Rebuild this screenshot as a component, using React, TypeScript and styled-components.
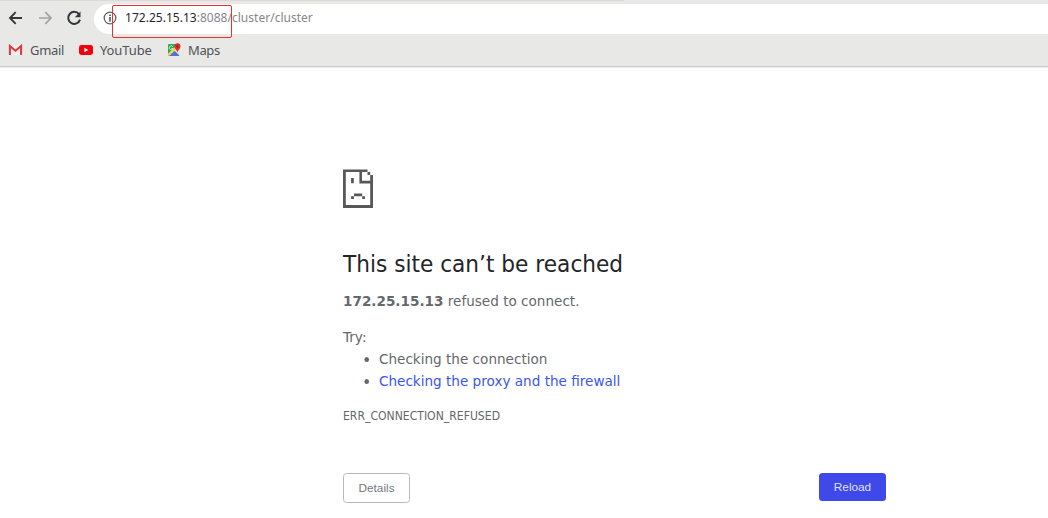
import React from "react";
import styled, { createGlobalStyle } from "styled-components";

const GlobalStyle = createGlobalStyle`
  * { box-sizing: border-box; }
  body {
    margin: 0;
    background: #fff;
    overflow: hidden;
  }
`

const Window = styled.div`
  display: flex;
  flex-flow: column;
  height: 518px;
  font-family: "DejaVu Sans", sans-serif;
`

const Chrome = styled.header`
  display: flex;
  flex-flow: column;
  height: 68px;
  flex-shrink: 0;
  background: #e8e8e7;
  border-bottom: 1px solid #e9e9e9;
  box-shadow: inset 0 -1px #cdcdcc;
  font-family: "Noto Sans", sans-serif;
`

const TabEdge = styled.div`
  width: 624px;
  height: 1px;
  background: #dadada;
`

const Toolbar = styled.div`
  display: flex;
  align-items: center;
  height: 34px;
  padding-left: 7px;
`

const NavButton = styled.span<{ $gap: number }>`
  display: flex;
  width: 18px;
  height: 18px;
  margin-right: ${p => p.$gap}px;
`

const AddressBar = styled.div`
  position: relative;
  display: flex;
  align-items: center;
  align-self: flex-start;
  flex: 1;
  height: 30px;
  margin-top: 3px;
  padding: 0 0 2px 9px;
  border-radius: 15px 0 0 15px;
  background: #fff;
`

const Url = styled.span`
  margin-left: 8px;
  font-size: 12px;
  letter-spacing: 0.02px;
  line-height: 18px;
  color: #85878a;
`

const Host = styled.span`
  color: #242629;
`

const Highlight = styled.div`
  position: absolute;
  left: 18px;
  top: 1px;
  width: 120px;
  height: 33px;
  border: 1px solid #e8322b;
  border-radius: 2px;
`

const Bookmarks = styled.nav`
  display: flex;
  align-items: center;
  height: 30px;
  padding-left: 8px;
`

const Bookmark = styled.span<{ $width: number; $spacing: number }>`
  display: flex;
  align-items: center;
  gap: 7px;
  width: ${p => p.$width}px;
  font-size: 13px;
  letter-spacing: ${p => p.$spacing}px;
  line-height: 18px;
  white-space: nowrap;
  color: #505356;

  svg { flex-shrink: 0; }
`

const ErrorPage = styled.main`
  display: flex;
  flex-flow: column;
  width: 543px;
  margin-left: 343px;
  padding-top: 101px;
`

/* the message is set slightly narrower than the font's own width */
const Message = styled.section`
  transform: scaleX(0.93);
  transform-origin: 0 0;
  font-size: 14.6px;
  line-height: 22px;
  color: #64686d;
`

const Title = styled.h1`
  margin: 42px 0 0;
  font-size: 23.3px;
  font-weight: 400;
  line-height: 28px;
  color: #242528;
`

const Summary = styled.p`
  margin: 12px 0 0;
`

const Try = styled.p`
  margin: 14px 0 0;
`

const Suggestions = styled.ul`
  margin: 0;
  padding-left: 38.7px;
`

const Link = styled.a`
  color: #3956ef;
`

const ErrorCode = styled.div`
  margin-top: 14px;
  font-size: 11.7px;
  line-height: 20px;
`

const Actions = styled.div`
  display: flex;
  justify-content: space-between;
  align-items: flex-start;
  margin-top: 47px;
`

const Button = styled.button<{ $primary?: boolean }>`
  width: 67px;
  height: ${p => (p.$primary ? 28 : 30)}px;
  padding: 0;
  border: ${p => (p.$primary ? "0" : "1px solid #b6babf")};
  border-radius: 3.5px;
  background: ${p => (p.$primary ? "#3f49e9" : "#fff")};
  color: ${p => (p.$primary ? "#dfe2ff" : "#74787c")};
  font-family: "Liberation Sans", sans-serif;
  font-size: 11.8px;
`

const Back = () => (
  <svg width="18" height="18" viewBox="0 0 18 18" fill="none" stroke="#35383b" strokeWidth="1.9">
    <path d="M15 9H3.3M8.7 3.2L3 9L8.7 14.8" />
  </svg>
)

const Forward = () => (
  <svg width="18" height="18" viewBox="0 0 18 18" fill="none" stroke="#a1a2a2" strokeWidth="1.7">
    <path d="M3 9H14.7M9.3 3.2L15 9L9.3 14.8" />
  </svg>
)

const Refresh = () => (
  <svg width="18" height="18" viewBox="0 0 18 18">
    <path d="M14 5.2A6 6 0 1 0 15 10.6" fill="none" stroke="#35383b" strokeWidth="2" />
    <path d="M15.5 2.6V8.3H9.8Z" fill="#35383b" />
  </svg>
)

const Info = () => (
  <svg width="14" height="14" viewBox="0 0 14 14">
    <circle cx="7" cy="7" r="5.8" fill="none" stroke="#606265" strokeWidth="1.3" />
    <path d="M6.2 6H7.8V10.5H6.2ZM6.2 3.5H7.8V5H6.2Z" fill="#505255" />
  </svg>
)

const Gmail = () => (
  <svg width="15" height="12" viewBox="0 0 15 12">
    <path d="M1 1H14V11H1Z" fill="#f2f0ef" />
    <path d="M1.9 11V2L7.5 6.8L13.1 2V11" fill="none" stroke="#d9393b" strokeWidth="2" />
  </svg>
)

const YouTube = () => (
  <svg width="14" height="10" viewBox="0 0 14 10">
    <rect width="14" height="10" rx="2.4" fill="#f40009" />
    <path d="M5.4 2.8L9.3 5L5.4 7.2Z" fill="#fff" />
  </svg>
)

const Maps = () => (
  <svg width="14" height="14" viewBox="0 0 14 14">
    <path d="M2 1H12V13H2Q1 13 1 12V2Q1 1 2 1Z" fill="#34a854" />
    <path d="M1 10.8L10 2L12 5L2.3 13L1 12.4Z" fill="#f4d84b" />
    <path d="M2.2 13L7.4 8L12.5 13Z" fill="#526de9" />
    <path d="M7.6 7.8L12.5 5V12.4Z" fill="#e5e6e6" />
    <path d="M5.8 3.6A2 2 0 1 0 6.1 5.5H4.3" fill="none" stroke="#e9f4ec" strokeWidth=".8" />
    <path d="M10.5 9.5C10 7 7.5 6 7.5 3.3A3 3 0 0 1 13.5 3.3C13.5 6 11 7 10.5 9.5Z" fill="#dd302b" />
    <circle cx="10.5" cy="3.4" r="1" fill="#8c1719" />
  </svg>
)

const SadFile = () => (
  <svg width="30" height="39" viewBox="0 0 30 39" fill="#58585a">
    <path d="M0 0.4H24.5V3H2.8V36.1H27.2V14.5H16.4V3H19V11.8H27.2V6H30V39H0Z" />
    <path d="M24.5 3H27.2V6H24.5ZM8.1 9H10.8V14.3H8.1ZM11 24.6H19.2V27.3H11ZM8.1 27.3H11V30H8.1ZM19.2 27.3H22V30H19.2Z" />
  </svg>
)

export default function App() {
  return (
    <Window>
      <GlobalStyle />
      <Chrome>
        <TabEdge />
        <Toolbar>
          <NavButton $gap={11}><Back /></NavButton>
          <NavButton $gap={11}><Forward /></NavButton>
          <NavButton $gap={11}><Refresh /></NavButton>
          <AddressBar>
            <Info />
            <Url><Host>172.25.15.13</Host>:8088/cluster/cluster</Url>
            <Highlight />
          </AddressBar>
        </Toolbar>
        <Bookmarks>
          <Bookmark $width={71} $spacing={-0.3}><Gmail />Gmail</Bookmark>
          <Bookmark $width={88} $spacing={-0.1}><YouTube />YouTube</Bookmark>
          <Bookmark $width={60} $spacing={-0.4}><Maps />Maps</Bookmark>
        </Bookmarks>
      </Chrome>

      <ErrorPage>
        <SadFile />
        <Message>
          <Title>This site can’t be reached</Title>
          <Summary><strong>172.25.15.13</strong> refused to connect.</Summary>
          <Try>Try:</Try>
          <Suggestions>
            <li>Checking the connection</li>
            <li><Link>Checking the proxy and the firewall</Link></li>
          </Suggestions>
          <ErrorCode>ERR_CONNECTION_REFUSED</ErrorCode>
        </Message>
        <Actions>
          <Button>Details</Button>
          <Button $primary>Reload</Button>
        </Actions>
      </ErrorPage>
    </Window>
  )
}
